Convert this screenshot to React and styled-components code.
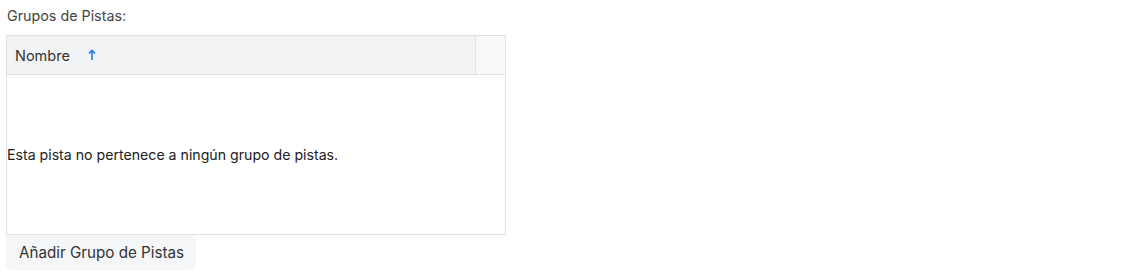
import styled, { createGlobalStyle } from "styled-components";

const GlobalStyle = createGlobalStyle`
  body {
    margin: 0;
    background: #fff;
    font-family: Inter, "Noto Sans", sans-serif;
  }
`;

const Wrapper = styled.section`
  padding: 6px;
  width: 500px;
`;

const Label = styled.div`
  font-size: 14.3px;
  line-height: 20px;
  color: #444;
  padding-left: 1px;
  margin-bottom: 9px;
`;

const Table = styled.div`
  border: 1px solid #dfe1e4;
  height: 198px;
  display: flex;
  flex-direction: column;
`;

const HeaderRow = styled.div`
  display: flex;
  height: 38px;
  border-bottom: 1px solid #dfe1e4;
  background: #f2f3f5;
`;

const HeaderCell = styled.div`
  flex: 1;
  display: flex;
  align-items: center;
  padding-left: 8px;
  font-size: 14.5px;
  color: #333;
`;

const SortArrow = styled.span`
  margin-left: 18px;
  display: inline-flex;
  color: #1a7cf0;
`;

const EndCell = styled.div`
  width: 29px;
  border-left: 1px solid #dfe1e4;
  background: #f8f9fa;
`;

const Body = styled.div`
  flex: 1;
  display: flex;
  align-items: center;
  font-size: 14.15px;
  color: #222;
`;

const AddButton = styled.button`
  font-family: inherit;
  font-size: 15.2px;
  color: #333;
  background: #f5f6f8;
  border: none;
  border-radius: 0 0 6px 6px;
  height: 35px;
  padding: 0 12px 0 13px;
  cursor: pointer;
`;

export default function App() {
  return (
    <>
      <GlobalStyle />
      <Wrapper>
        <Label>Grupos de Pistas:</Label>
        <Table>
          <HeaderRow>
            <HeaderCell>
              Nombre
              <SortArrow>
                <svg width="8" height="12" viewBox="0 0 8 12" fill="none">
                  <path d="M4 11V2" stroke="currentColor" strokeWidth="1.6" />
                  <path d="M1 4.5L4 1.5L7 4.5" stroke="currentColor" strokeWidth="1.6" />
                </svg>
              </SortArrow>
            </HeaderCell>
            <EndCell />
          </HeaderRow>
          <Body>Esta pista no pertenece a ningún grupo de pistas.</Body>
        </Table>
        <AddButton>Añadir Grupo de Pistas</AddButton>
      </Wrapper>
    </>
  );
}
